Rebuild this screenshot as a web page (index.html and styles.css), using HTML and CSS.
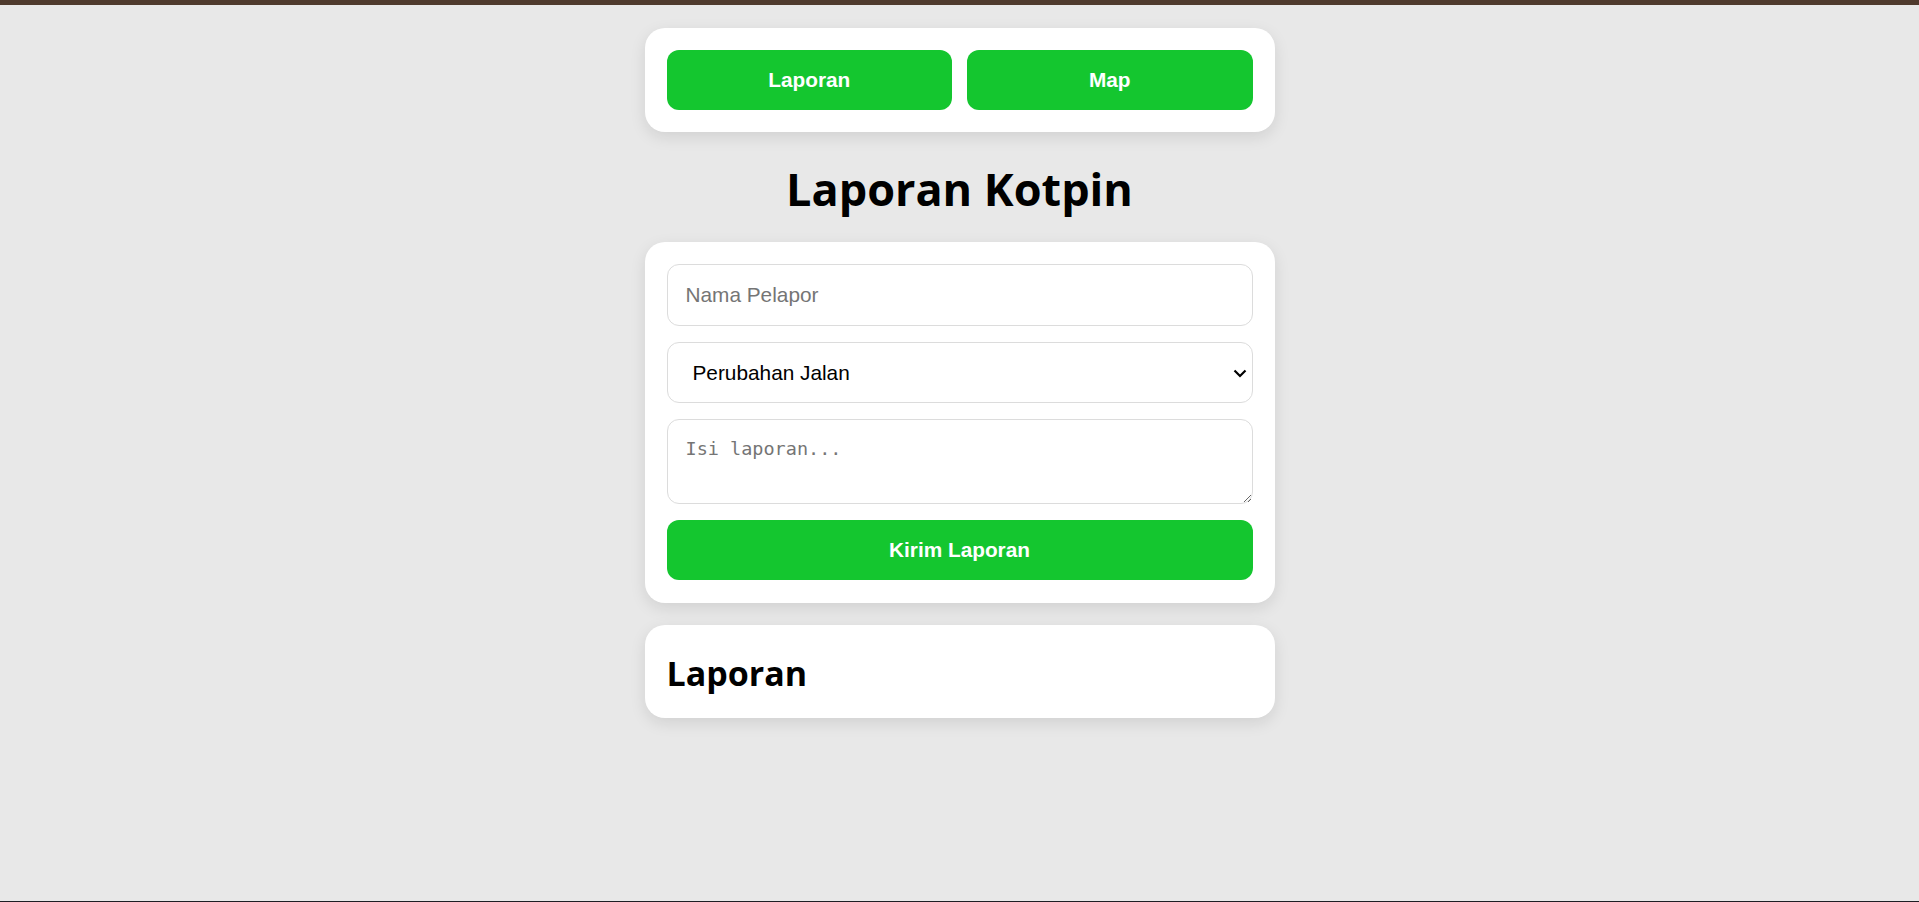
FILE: index.html
```html
<!DOCTYPE html>
<html lang="id">

<head>
    <meta charset="UTF-8">
    <meta name="viewport" content="width=device-width, initial-scale=1.0">
    <title>Laporan Kotpin</title>
    <link rel="stylesheet" href="styles.css">
</head>

<body>
    <div class="topbar"></div>

    <main class="container">
        <nav class="card nav">
            <button class="btn" type="button">Laporan</button>
            <button class="btn" type="button">Map</button>
        </nav>

        <h1 class="title">Laporan Kotpin</h1>

        <form class="card report-form">
            <input class="field" type="text" placeholder="Nama Pelapor">
            <div class="select-wrap">
                <select class="field field-select">
                    <option>Perubahan Jalan</option>
                    <option>Jalan Rusak</option>
                    <option>Lainnya</option>
                </select>
                <!-- dropdown chevron -->
                <svg class="chevron" width="14" height="9" viewBox="0 0 14 9">
                    <path d="M1.5 1.5 L7 7 L12.5 1.5" fill="none" stroke="#000" stroke-width="2.2" />
                </svg>
            </div>
            <textarea class="field field-text" placeholder="Isi laporan..."></textarea>
            <button class="btn" type="submit">Kirim Laporan</button>
        </form>

        <section class="card list">
            <h2>Laporan</h2>
        </section>
    </main>
</body>

</html>
```

FILE: styles.css
```css
body {
    margin: 0;
    min-height: 100vh;
    box-sizing: border-box;
    background: #e8e8e8;
    color: #000000;
    font-family: 'Open Sans', 'Noto Sans', sans-serif;
    border-bottom: 1px solid #1e1e24;
}

.topbar {
    height: 5px;
    background: #4f3a2d;
}

.container {
    width: 630px;
    margin: 23px auto 0 auto;
    display: flex;
    flex-direction: column;
}

.card {
    background: #ffffff;
    border-radius: 20px;
    box-shadow: 0 5px 16px rgba(0, 0, 0, 0.1);
    padding: 22px;
    box-sizing: border-box;
}

.nav {
    display: flex;
    gap: 15px;
}

.nav .btn {
    flex: 1;
}

.btn {
    height: 60px;
    border: none;
    border-radius: 12px;
    background: #14c62f;
    color: #ffffff;
    font-family: 'Liberation Sans', Arial, sans-serif;
    font-size: 20.8px;
    font-weight: bold;
    cursor: pointer;
}

.title {
    margin: 26px 0 22px 0;
    text-align: center;
    font-size: 45px;
    line-height: 62px;
    font-weight: 700;
}

.report-form {
    display: flex;
    flex-direction: column;
    gap: 16px;
    padding-bottom: 23px;
}

.field {
    width: 100%;
    height: 61.5px;
    box-sizing: border-box;
    border: 1px solid #dcdcdc;
    border-radius: 12px;
    padding: 0 18px;
    background: #ffffff;
    color: #000000;
    font-family: 'Liberation Sans', Arial, sans-serif;
    font-size: 20.8px;
    outline: none;
}

.field::placeholder {
    color: #757575;
}

.select-wrap {
    position: relative;
}

.field-select {
    display: block;
    appearance: none;
    -webkit-appearance: none;
    padding-left: 25px;
    padding-right: 40px;
}

.chevron {
    position: absolute;
    right: 6px;
    top: 27px;
    pointer-events: none;
}

.field-text {
    height: 85px;
    padding: 18px;
    font-family: 'DejaVu Sans Mono', monospace;
    font-size: 18.5px;
    resize: vertical;
}

.list {
    margin-top: 22px;
    padding: 24px 22px 20px 22px;
}

.list h2 {
    margin: 0;
    font-size: 34px;
    line-height: 49px;
    font-weight: 700;
}
```
